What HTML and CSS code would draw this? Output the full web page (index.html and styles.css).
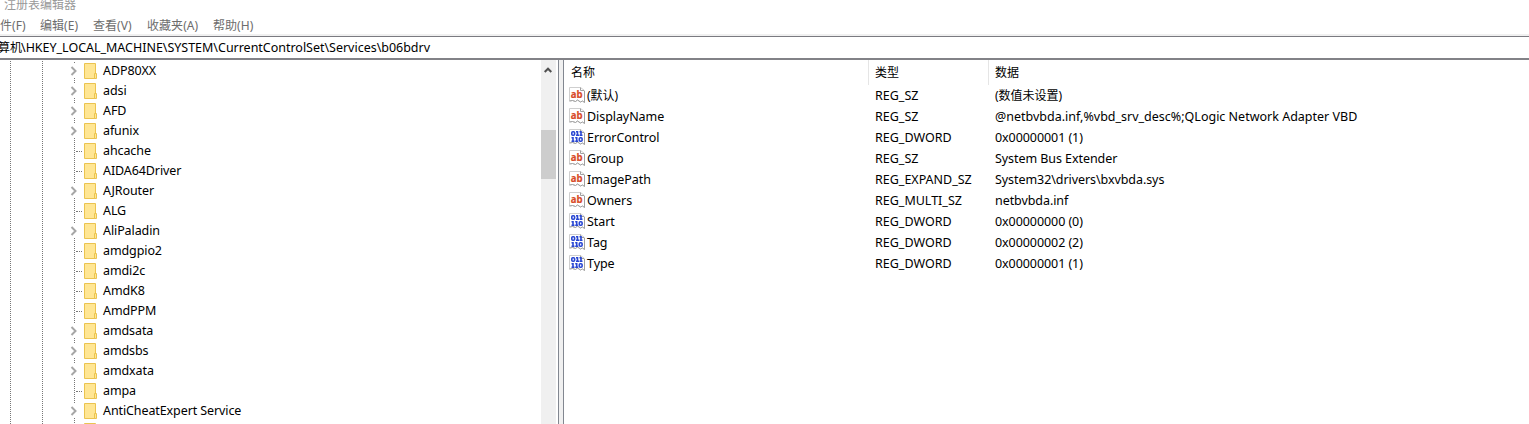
FILE: index.html
```html
<!DOCTYPE html>
<html lang="zh-CN">
<head>
<meta charset="utf-8">
<title>注册表编辑器</title>
<link rel="stylesheet" href="styles.css">
</head>
<body>
<svg class="defs" width="0" height="0">
  <symbol id="chevron" viewBox="0 0 8 14"><path d="M1.500 3 5.500 7 1.500 11" fill="none" stroke="#a6a6a6" stroke-width="2"/></symbol>
  <symbol id="folder" viewBox="0 0 13 16"><path d="M.5.5h11v15H.5z" fill="#ffe694" stroke="#ebc450"/><path d="M10.500 10.500h2v5h-2z" fill="#ffe694" stroke="#ebc450"/></symbol>
  <symbol id="page" viewBox="0 0 16 16"><path d="M.5.5h11l4 3v12l-2-1.500-2 1-3-2-2 1.500-3-1-3 .5z" fill="#fff" stroke="#cfcfcf"/><path d="M11.500.5v3h3.500M15.500 4v11.500l-2-1.500-2 1-3-2-2 1.500-3-1-3 .5" fill="none" stroke="#a0a0a0"/></symbol>
  <symbol id="binary" viewBox="0 0 16 16"><use href="#page"/><g fill="none" stroke="#2846d2" stroke-width="1.600"><rect x="2.800" y="2.800" width="2.800" height="3.400" rx="1"/><path d="M8.500 2v5M7 2.800h1.500M7 6.300h3M12 2v5M10.500 2.800H12M10.500 6.300h3M4 8v5M2.500 8.800H4M2.500 12.300h3M7.700 8v5M6.200 8.800h1.500M6.200 12.300h3"/><rect x="10.300" y="8.800" width="2.800" height="3.400" rx="1"/></g></symbol>
</svg>
<div class="title">注册表编辑器</div>
<nav class="menu"><span class="file">件(F)</span><span class="edit">编辑(E)</span><span class="view">查看(V)</span><span class="fav">收藏夹(A)</span><span>帮助(H)</span></nav>
<div class="address"><span class="pc">算机</span><span class="path">\HKEY_LOCAL_MACHINE\SYSTEM\CurrentControlSet\Services\b06bdrv</span></div>
<main class="panes">
  <section class="left"><div class="tree" id="tree"></div>
    <div class="scroll"><svg class="up" viewBox="0 0 8 6"><path d="M.7 5 4 1.700 7.300 5" fill="none" stroke="#505050" stroke-width="2"/></svg><div class="thumb"></div></div>
  </section>
  <div class="splitter"></div>
  <section class="list">
    <div class="head"><span class="name">名称</span><span class="type">类型</span><span class="data">数据</span></div>
    <div id="values"></div>
  </section>
</main>
<script src="app.js"></script>
</body>
</html>
```
FILE: styles.css
```css
* { box-sizing: border-box; }
body { margin: 0; width: 1529px; height: 424px; overflow: hidden; display: flex; flex-direction: column; background: #fff; color: #000; font: 12.5px/20px "Noto Sans", "Noto Sans CJK SC", sans-serif; white-space: nowrap; }
.defs { position: absolute; }
svg { display: block; flex: none; }
.title { height: 15px; padding-left: 4px; line-height: 10px; font-size: 12px; color: #999; }
.menu { height: 19px; display: flex; line-height: 22px; font-size: 12px; letter-spacing: .05px; color: #6d6d6d; }
.file { width: 40px; }
.edit { width: 53px; }
.view { width: 54px; }
.fav { width: 66px; }
.address { height: 24px; border-top: 1px solid #7a7a80; border-bottom: 2px solid #828287; margin-top: 2px; display: flex; line-height: 22px; box-shadow: 0 -2px #f0f0f0; }
.pc { font-size: 12px; margin-left: -2px; width: 23px; }
.path { letter-spacing: -.02px; }
.panes { height: 364px; display: flex; }
.left { width: 559px; display: flex; border-right: 1px solid #828790; }
.tree { width: 541px; height: 364px; overflow: hidden; padding-top: 1px; letter-spacing: -.1px; background: repeating-linear-gradient(#fff 0 1px, transparent 1px 2px), linear-gradient(90deg, transparent 10px, #777 10px 11px, transparent 11px 42px, #777 42px 43px, transparent 43px); }
.node { height: 20px; display: flex; align-items: center; padding-left: 69px; }
.twist { width: 15px; height: 20px; flex: none; display: flex; align-items: center; padding-left: 1px; background: repeating-linear-gradient(#fff 0 1px, transparent 1px 2px), linear-gradient(90deg, transparent 5px, #777 5px 6px, transparent 6px); }
.chevron { width: 8px; height: 14px; background: #fff; }
.leaf::after { content: ""; margin-left: 6px; width: 6px; border-top: 1px dotted #777; }
.folder { width: 13px; height: 16px; margin-right: 6px; }
.scroll { width: 15px; background: #f0f0f0; padding-top: 7px; }
.up { width: 8px; height: 6px; margin: 0 0 57px 3px; }
.thumb { height: 49px; background: #cdcdcd; }
.splitter { width: 4px; background: #f0f0f0; }
.list { flex: 1; border-left: 1px solid #828790; }
.head { height: 25px; display: flex; font-size: 12px; line-height: 25px; }
.head span { padding-left: 6px; }
.head .name { width: 304px; padding-left: 7px; }
.head .type { width: 120px; }
.head .type, .head .data { border-left: 1px solid #e5e5e5; }
.row { height: 21px; display: flex; align-items: center; padding-left: 5px; line-height: 21px; }
.icon { width: 16px; height: 16px; margin: -2px 2px 0 0; }
.ab { font: bold 11px "Open Sans", sans-serif; fill: #d84a27; stroke: #d84a27; stroke-width: .2px; }
.label { width: 288px; letter-spacing: -.07px; }
.kind { width: 120px; }
.plain { letter-spacing: -.07px; }
.cjk { font-size: 12px; }
```
FILE: app.js
```js
const icon = (id, cls) => `<svg class="${cls}"><use href="#${id}"/></svg>`;
const stringIcon = '<svg class="icon" viewBox="0 0 16 16"><use href="#page"/><text x="1.700" y="10.600" class="ab" textLength="11.800" lengthAdjust="spacingAndGlyphs">ab</text></svg>';
const nodes = [['ADP80XX',1],['adsi',1],['AFD',1],['afunix',1],['ahcache',0],['AIDA64Driver',0],['AJRouter',1],['ALG',0],['AliPaladin',1],['amdgpio2',0],['amdi2c',0],['AmdK8',0],['AmdPPM',0],['amdsata',1],['amdsbs',1],['amdxata',1],['ampa',0],['AntiCheatExpert Service',1],['',0]];
document.getElementById('tree').innerHTML = nodes.map(([name, open]) =>
  `<div class="node"><span class="twist ${open ? '' : 'leaf'}">${open ? icon('chevron', 'chevron') : ''}</span>${icon('folder', 'folder')}<span>${name}</span></div>`).join('');
const values = [
  ['string','(默认)','REG_SZ','(数值未设置)'],
  ['string','DisplayName','REG_SZ','@netbvbda.inf,%vbd_srv_desc%;QLogic Network Adapter VBD'],
  ['binary','ErrorControl','REG_DWORD','0x00000001 (1)'],
  ['string','Group','REG_SZ','System Bus Extender'],
  ['string','ImagePath','REG_EXPAND_SZ','System32\\drivers\\bxvbda.sys'],
  ['string','Owners','REG_MULTI_SZ','netbvbda.inf'],
  ['binary','Start','REG_DWORD','0x00000000 (0)'],
  ['binary','Tag','REG_DWORD','0x00000002 (2)'],
  ['binary','Type','REG_DWORD','0x00000001 (1)']
];
document.getElementById('values').innerHTML = values.map(([type, name, kind, data], i) => {
  const cls = i === 0 ? 'cjk' : i === 1 ? '' : 'plain';
  return `<div class="row">${type === 'string' ? stringIcon : icon(type, 'icon')}<span class="label ${cls}">${name}</span><span class="kind">${kind}</span><span class="${cls}">${data}</span></div>`;
}).join('');
```
